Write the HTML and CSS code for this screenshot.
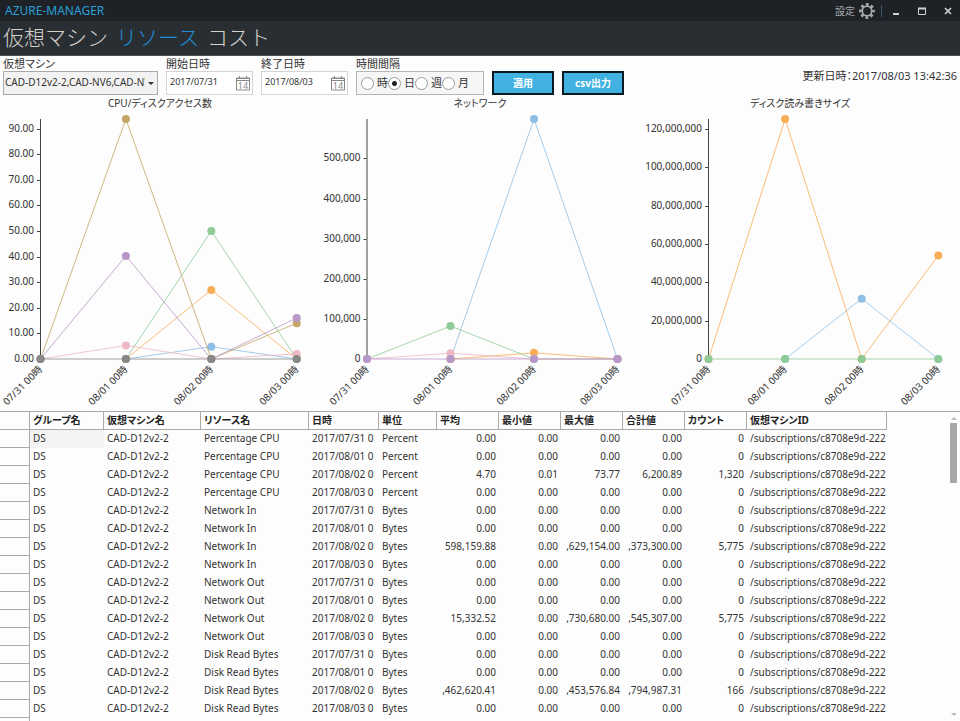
FILE: index.html
```html
<!DOCTYPE html>
<html lang="ja">
<head>
    <meta charset="UTF-8">
    <title>AZURE-MANAGER</title>
    <link rel="stylesheet" href="styles.css">
</head>
<body>
<header class="titlebar">
    <h1>AZURE-MANAGER</h1>
    <div class="window-buttons">
        <button type="button" class="setting">設定
            <svg width="16" height="16" viewBox="0 0 16 16">
                <circle cx="8" cy="8" r="4.8" fill="none" stroke="#a8abb0" stroke-width="1.8"/>
                <circle cx="8" cy="8" r="6.6" fill="none" stroke="#a8abb0" stroke-width="2.6" stroke-dasharray="2.7 2.484" stroke-dashoffset="1.35"/>
            </svg>
        </button>
        <span class="line"></span>
        <button type="button" aria-label="最小化">
            <svg width="8" height="10" viewBox="0 0 8 10"><path d="M1 8h6" stroke="#d0d0d0" stroke-width="2"/></svg>
        </button>
        <button type="button" aria-label="最大化">
            <svg width="8" height="10" viewBox="0 0 8 10"><path d="M.5 2v6.500h7V2" fill="none" stroke="#d0d0d0"/><path d="M0 2.500h8" stroke="#d0d0d0" stroke-width="2"/></svg>
        </button>
        <button type="button" aria-label="閉じる">
            <svg width="8" height="10" viewBox="0 0 8 10"><path d="M1 2l6 6M7 2l-6 6" stroke="#d0d0d0" stroke-width="1.600"/></svg>
        </button>
    </div>
</header>
<nav class="tabs">
    <a href="#">仮想マシン</a>
    <a href="#" class="current">リソース</a>
    <a href="#">コスト</a>
</nav>

<form class="filter">
    <div class="field vm">
        <label for="vm">仮想マシン</label>
        <div class="select">
            <select id="vm">
                <option>CAD-D12v2-2,CAD-NV6,CAD-NV12</option>
            </select>
        </div>
    </div>
    <div class="field date">
        <label for="start">開始日時</label>
        <div class="date-box">
            <input type="text" id="start" value="2017/07/31">
            <button type="button" aria-label="開始日時を選択">
                <svg width="16" height="16" viewBox="0 0 16 16"><path d="M1.500 3v12h13V3z" fill="none" stroke="#888"/><path d="M1 3.500h14M1 5.500h14M4.500 1v3M11.500 1v3" stroke="#888"/><text x="8" y="13.500" class="day">14</text></svg>
            </button>
        </div>
    </div>
    <div class="field date">
        <label for="end">終了日時</label>
        <div class="date-box">
            <input type="text" id="end" value="2017/08/03">
            <button type="button" aria-label="終了日時を選択">
                <svg width="16" height="16" viewBox="0 0 16 16"><path d="M1.500 3v12h13V3z" fill="none" stroke="#888"/><path d="M1 3.500h14M1 5.500h14M4.500 1v3M11.500 1v3" stroke="#888"/><text x="8" y="13.500" class="day">14</text></svg>
            </button>
        </div>
    </div>
    <div class="field" role="radiogroup" aria-labelledby="span-label">
        <span class="caption" id="span-label">時間間隔</span>
        <div class="radios">
            <label><input type="radio" name="span">時</label>
            <label><input type="radio" name="span" checked>日</label>
            <label><input type="radio" name="span">週</label>
            <label><input type="radio" name="span">月</label>
        </div>
    </div>
    <button type="button" class="btn">適用</button>
    <button type="button" class="btn">csv出力</button>
    <p class="updated">更新日時：2017/08/03 13:42:36</p>
</form>

<section class="charts">
    <div class="chart">
        <h2>CPU/ディスクアクセス数</h2>
        <svg id="cpu" viewBox="0 0 320 300"></svg>
    </div>
    <div class="chart">
        <h2>ネットワーク</h2>
        <svg id="network" viewBox="0 0 320 300"></svg>
    </div>
    <div class="chart">
        <h2>ディスク読み書きサイズ</h2>
        <svg id="disk" viewBox="0 0 320 300"></svg>
    </div>
</section>

<section class="grid">
    <div class="rows">
        <table>
            <colgroup>
                <col class="w-head"><col class="w-group"><col class="w-vm"><col class="w-res"><col class="w-time"><col class="w-unit">
                <col class="w-num"><col class="w-num"><col class="w-num"><col class="w-num"><col class="w-num"><col class="w-id">
            </colgroup>
            <thead>
            <tr>
                <th></th><th>グループ名</th><th>仮想マシン名</th><th>リソース名</th><th>日時</th><th>単位</th>
                <th>平均</th><th>最小値</th><th>最大値</th><th>合計値</th><th>カウント</th><th>仮想マシンID</th>
            </tr>
            </thead>
            <tbody id="list"></tbody>
        </table>
    </div>
    <div class="scroll">
        <span class="up"></span>
        <span class="thumb"></span>
        <span class="down"></span>
    </div>
</section>
<script src="main.js"></script>
</body>
</html>
```
FILE: styles.css
```css
* {
    margin: 0;
    padding: 0;
    box-sizing: border-box;
}

body {
    display: flex;
    flex-direction: column;
    height: 100vh;
    overflow: hidden;
    background-color: #fdfdfd;
    color: #333;
    font: 10px/14px "Noto Sans", "Noto Sans CJK JP", sans-serif;
    font-feature-settings: "palt";
}

button, input, select {
    font: inherit;
    font-feature-settings: inherit;
    color: inherit;
    border: none;
    background: none;
}

svg {
    display: block;
}

/* header */
.titlebar {
    display: flex;
    justify-content: space-between;
    align-items: center;
    height: 21px;
    padding: 0 8px 0 5px;
    background-color: #1e2227;
}
.titlebar h1 {
    color: #2a9fd6;
    font-size: 12px;
    font-weight: normal;
}
.window-buttons {
    display: flex;
    align-items: center;
    gap: 18px;
}
.window-buttons .setting {
    display: flex;
    align-items: center;
    gap: 4px;
    color: #a8abb0;
}
.window-buttons .line {
    width: 1px;
    height: 12px;
    margin: 0 -8px 0 -12px;
    background-color: #34566b;
}
.tabs {
    display: flex;
    align-items: center;
    gap: 8px;
    height: 35px;
    padding: 0 3px 4px;
    border-bottom: 1px solid #4a4f54;
    background-color: #292e33;
    font: 300 21px/30px "Noto Sans CJK JP", sans-serif;
}
.tabs a {
    color: #d5d2cc;
    text-decoration: none;
}
.tabs .current {
    color: #1f8fd8;
}

/* filter */
.filter {
    display: flex;
    align-items: flex-end;
    gap: 8px;
    height: 39px;
    padding: 0 3px;
}
.field > label, .caption {
    display: block;
    font-size: 11px;
    line-height: 14px;
}
.vm {
    width: 155px;
}
.date {
    width: 87px;
}
.select {
    position: relative;
    height: 24px;
    border: 1px solid #aaa;
    background-color: #f2f2f2;
}
.select::after {
    content: "";
    position: absolute;
    right: 3px;
    top: 10px;
    border: 3px solid transparent;
    border-top-color: #333;
    pointer-events: none;
}
.select select {
    width: 100%;
    height: 20px;
    padding: 0 12px 0 1px;
    appearance: none;
}
.date-box {
    display: flex;
    align-items: center;
    height: 24px;
    padding: 0 1px 0 3px;
    border: 1px solid #d5d5d5;
    background-color: #fff;
}
.date-box input {
    flex: 1;
    min-width: 0;
    padding-bottom: 2px;
    font-size: 9px;
}
.day {
    fill: #888;
    font-size: 9px;
    text-anchor: middle;
}
.radios {
    display: flex;
    align-items: center;
    height: 24px;
    padding: 0 14px 0 4px;
    border: 1px solid #b5b5b5;
    background-color: #f6f6f6;
}
.radios label {
    display: flex;
    align-items: center;
    gap: 3px;
    font-size: 11px;
}
.radios input {
    width: 13px;
    height: 13px;
    border: 1px solid #999;
    border-radius: 50%;
    background-color: #fff;
    appearance: none;
}
.radios input:checked {
    background-image: radial-gradient(#222 0 2px, transparent 3px);
}
.btn {
    width: 62px;
    height: 24px;
    border: 2px solid #0a1a22;
    background-color: #41b1e1;
    color: #fff;
    font-weight: bold;
}
.updated {
    align-self: center;
    margin-left: auto;
    font-size: 11px;
}

/* charts */
.charts {
    display: grid;
    grid-template-columns: repeat(3, 1fr);
    flex-shrink: 0;
}
.chart h2 {
    font-size: 10px;
    font-weight: normal;
    line-height: 16px;
    text-align: center;
}
.chart svg {
    width: 100%;
}
.chart text {
    fill: #333;
    font-size: 10px;
    text-anchor: end;
}
.chart polyline {
    fill: none;
    opacity: .8;
}
.axis {
    stroke: #444;
}

/* table */
.grid {
    display: flex;
    flex: 1;
    min-height: 0;
    border-top: 1px solid #aaa;
}
.rows {
    flex: 1;
    overflow: hidden;
}
table {
    width: 887px;
    table-layout: fixed;
    border-collapse: separate;
    border-spacing: 0;
}
th, td {
    height: 18px;
    padding: 0 3px 2px;
    overflow: hidden;
    line-height: 16px;
    text-align: left;
    white-space: nowrap;
}
th {
    padding-bottom: 1px;
    border-right: 1px solid #aaa;
    border-bottom: 1px solid #aaa;
    color: #222;
}
.num {
    text-align: right;
}
.selected {
    background-color: #f3f3f3;
}
.w-head { width: 30px; }
.w-group { width: 74px; }
.w-vm { width: 97px; }
.w-res { width: 108px; }
.w-time { width: 70px; }
.w-unit { width: 58px; }
.w-num { width: 62px; }
.w-id { width: 140px; }

.scroll {
    display: flex;
    flex-direction: column;
    align-items: center;
    gap: 3px;
    width: 13px;
    padding: 2px 0;
}
.scroll .up, .scroll .down {
    border: 3px solid transparent;
}
.scroll .up {
    border-bottom-color: #bbb;
}
.scroll .down {
    margin-top: auto;
    border-top-color: #bbb;
}
.scroll .thumb {
    width: 7px;
    height: 60px;
    background-color: #a9a9a9;
}
```
FILE: main.js
```js
var days = ["07/31 00時", "08/01 00時", "08/02 00時", "08/03 00時"];
var blue = "#8dbfe6", orange = "#f9ad56", green = "#8fcb97", pink = "#edb8c4",
    tan = "#c4a565", purple = "#b796c8", gray = "#888";

// left: x of the axis, step: distance between two days, max: value at the top
drawChart("cpu", {
    left: 40, step: 85.4, max: 93.8, tick: 10, digits: 2,
    series: [
        [blue, null, 0, 4.8, 0],
        [orange, null, 0, 27, 0],
        [green, null, 0, 50, 0],
        [pink, 0, 5.3, 0, 2],
        [tan, 0, 93.8, 0, 14],
        [purple, 0, 40.3, 0, 16],
        [gray, 0, 0, 0, 0]
    ]
});
drawChart("network", {
    left: 46.5, step: 83.5, max: 598159, tick: 100000, digits: 0,
    series: [
        [blue, null, 0, 598159, 0],
        [orange, null, 0, 15332, 0],
        [green, 0, 82000, 0, 0],
        [pink, 0, 14500, 0, 0],
        [purple, 0, 0, 0, 0]
    ]
});
drawChart("disk", {
    left: 68, step: 76.6, max: 125200000, tick: 20000000, digits: 0,
    series: [
        [blue, null, 0, 31462620, 0],
        [orange, 0, 125200000, 0, 54000000],
        [green, 0, 0, 0, 0]
    ]
});

function drawChart(id, c) {
    var top = 8, bottom = 248;
    var html = '<path class="axis" d="M' + (c.left + 0.5) + ' ' + top + 'V' + bottom + '"/>';
    function y(v) {
        return bottom - v / c.max * (bottom - top);
    }
    for (var v = 0; v <= c.max; v += c.tick) {
        var label = v.toLocaleString("en-US", {minimumFractionDigits: c.digits});
        html += '<path class="axis" d="M' + (c.left - 3) + ' ' + (Math.round(y(v)) + 0.5) + 'h3"/>';
        html += '<text x="' + (c.left - 6) + '" y="' + (y(v) + 3) + '">' + label + '</text>';
    }
    for (var i = 0; i < days.length; i++) {
        var x = c.left + c.step * i;
        html += '<text transform="translate(' + (x + 3) + ' 259) rotate(-45)">' + days[i] + '</text>';
    }
    c.series.forEach(function (s) {
        var points = [], dots = "";
        for (var i = 1; i < s.length; i++) {
            if (s[i] === null) continue;
            var x = c.left + 0.5 + c.step * (i - 1);
            points.push(x + "," + y(s[i]));
            dots += '<circle cx="' + x + '" cy="' + y(s[i]) + '" r="4" fill="' + s[0] + '"/>';
        }
        html += '<polyline points="' + points.join(" ") + '" stroke="' + s[0] + '"/>' + dots;
    });
    document.getElementById(id).innerHTML = html;
}

// rows of the grid: four days for each resource
var dates = ["2017/07/31 0", "2017/08/01 0", "2017/08/02 0", "2017/08/03 0"];
var zero = ["0.00", "0.00", "0.00", "0.00", "0"];
var resources = [
    ["Percentage CPU", "Percent", ["4.70", "0.01", "73.77", "6,200.89", "1,320"]],
    ["Network In", "Bytes", ["598,159.88", "0.00", ",629,154.00", ",373,300.00", "5,775"]],
    ["Network Out", "Bytes", ["15,332.52", "0.00", ",730,680.00", ",545,307.00", "5,775"]],
    ["Disk Read Bytes", "Bytes", [",462,620.41", "0.00", ",453,576.84", ",794,987.31", "166"]]
];
var rows = "";
resources.forEach(function (r, n) {
    dates.forEach(function (date, i) {
        var values = i === 2 ? r[2] : zero;
        rows += '<tr><th></th><td' + (n + i === 0 ? ' class="selected"' : '') + '>DS</td><td>CAD-D12v2-2</td>' +
            '<td>' + r[0] + '</td><td>' + date + '</td><td>' + r[1] + '</td>' +
            '<td class="num">' + values.join('</td><td class="num">') + '</td>' +
            '<td>/subscriptions/c8708e9d-222</td></tr>';
    });
});
rows += '<tr><th></th><td colspan="11"></td></tr>';
document.getElementById("list").innerHTML = rows;
```
